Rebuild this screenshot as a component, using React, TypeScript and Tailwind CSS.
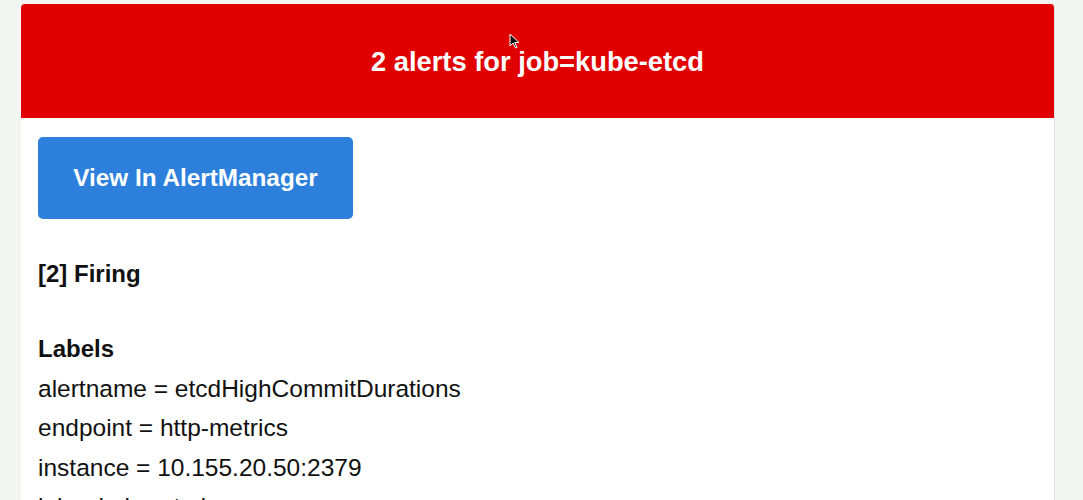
import React from "react";

export default function App() {
  const labels = [
    "alertname = etcdHighCommitDurations",
    "endpoint = http-metrics",
    "instance = 10.155.20.50:2379",
    "job = kube-etcd",
  ];
  return (
    <div
      className="relative w-[1083px] h-[500px] overflow-hidden bg-[#f3f5f3] pt-[4px] pl-[21px]"
      style={{ fontFamily: '"Liberation Sans", Arial, Helvetica, sans-serif' }}
    >
      <div className="w-[1034px] h-[600px] rounded-t-[4px] bg-white border-r border-[#dfe2df] overflow-hidden">
        <div className="h-[114px] bg-[#e10000] flex items-center justify-center pt-[2px]">
          <span className="text-white font-bold text-[27.3px] leading-none">
            2 alerts for job=kube-etcd
          </span>
        </div>
        <div className="pl-[17px] pt-[19px]">
          <div className="w-[315px] h-[82px] rounded-[5px] bg-[#2c80dc] flex items-center justify-center">
            <span className="text-white font-bold text-[24.3px] leading-none">View In AlertManager</span>
          </div>
          <div className="mt-[35px] text-[24px] leading-[39.5px] font-bold text-[#111]">[2] Firing</div>
          <div className="mt-[35.5px] text-[24px] leading-[39.5px] font-bold text-[#111]">Labels</div>
          {labels.map((l) => (
            <div key={l} className="text-[24.5px] leading-[39.5px] text-[#111]">
              {l}
            </div>
          ))}
        </div>
      </div>
      <svg
        className="absolute left-[509px] top-[33px]"
        width="11"
        height="16"
        viewBox="0 0 11 16"
      >
        <path d="M1 1 L1 13 L4 10 L6.5 15 L8 14.3 L5.7 9.5 L10 9.5 Z" fill="#111" stroke="#fff" strokeWidth="1" />
      </svg>
    </div>
  );
}
